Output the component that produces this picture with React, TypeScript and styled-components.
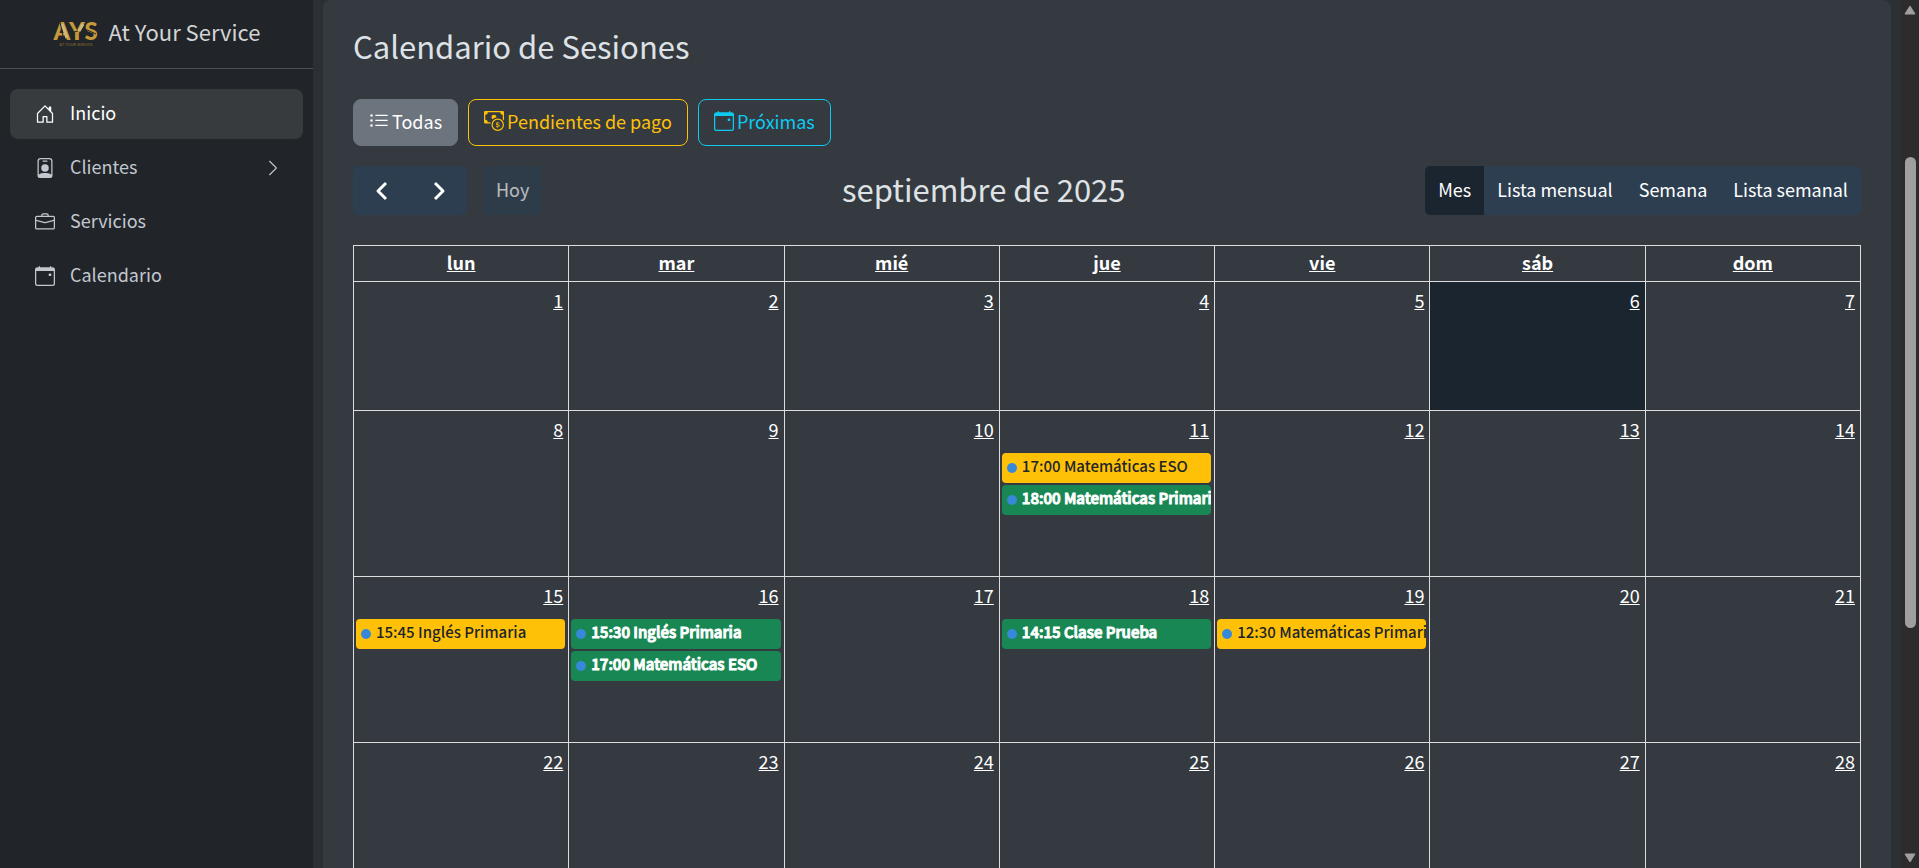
import React from 'react';
import styled, { createGlobalStyle, css } from 'styled-components';
import {
  BsHouseDoor,
  BsPersonBadge,
  BsBriefcase,
  BsCalendarEvent,
  BsChevronRight,
  BsListUl,
  BsCashCoin,
} from 'react-icons/bs';

const GlobalStyle = createGlobalStyle`
  *, *::before, *::after { box-sizing: border-box; }
  body {
    margin: 0;
    background: #2b3035;
    color: #dee2e6;
    font-family: "Noto Sans CJK SC", "Noto Sans", sans-serif;
    font-size: 18px;
    line-height: 30px;
  }
  button { font: inherit; cursor: pointer; }
  a { color: inherit; }
`;

const Shell = styled.div`
  display: flex;
  height: 100vh;
  overflow: hidden;
`;

/* The face sits low in its line box, so labels carry a little room below. */
const Label = styled.span`
  padding-bottom: 4px;
`;

const Sidebar = styled.aside`
  flex: 0 0 313px;
  background: #212529;
`;

const Brand = styled.a`
  display: flex;
  align-items: center;
  justify-content: center;
  gap: 10px;
  height: 69px;
  padding-bottom: 2px;
  border-bottom: 1px solid #495057;
  color: #d3d4d5;
  font-size: 22px;
  text-decoration: none;
`;

const Nav = styled.nav`
  display: flex;
  flex-direction: column;
  gap: 4px;
  padding: 20px 10px;
`;

const NavLink = styled.a<{ $active?: boolean }>`
  display: flex;
  align-items: center;
  height: 50px;
  padding: 0 21px 0 25px;
  border-radius: 8px;
  color: ${(p) => (p.$active ? '#fff' : '#c2c7d0')};
  background: ${(p) => (p.$active ? 'rgba(255, 255, 255, 0.1)' : 'transparent')};
  text-decoration: none;

  ${Label} { flex: 1; padding-left: 15px; }
`;

const Main = styled.main`
  flex: 1;
  min-width: 0;
  padding: 0 10px;
`;

const Card = styled.section`
  min-height: 100%;
  padding: 23px 30px;
  border-radius: 8px 8px 0 0;
  background: #343a40;
`;

const Heading = styled.h1`
  margin: 0 0 31px;
  font-size: 31px;
  font-weight: 400;
  line-height: 45px;
`;

const Filters = styled.div`
  display: flex;
  gap: 10px;
`;

const tones = {
  solid: css`border-color: #6c757d; background: #6c757d; color: #fff;`,
  warning: css`border-color: #ffc107; background: none; color: #ffc107;`,
  info: css`border-color: #0dcaf0; background: none; color: #0dcaf0;`,
};

const FilterButton = styled.button<{ $tone: keyof typeof tones }>`
  display: flex;
  align-items: center;
  gap: 3px;
  height: 47px;
  padding: 0 15px;
  border: 1px solid;
  border-radius: 8px;
  ${(p) => tones[p.$tone]}

  svg { margin-bottom: 4px; }
`;

const Toolbar = styled.header`
  display: flex;
  align-items: center;
  justify-content: space-between;
  margin: 20px 0 30px;
`;

const ToolbarSide = styled.div`
  display: flex;
  gap: 16px;
`;

const ButtonGroup = styled.div`
  display: flex;
  overflow: hidden;
  border-radius: 5px;
`;

const ToolButton = styled.button<{ $active?: boolean }>`
  display: flex;
  align-items: center;
  height: 49px;
  padding: 0 13px;
  border: 0;
  background: ${(p) => (p.$active ? '#1a252f' : '#2c3e50')};
  color: #fff;

  &:disabled {
    border-radius: 5px;
    opacity: 0.65;
  }
`;

const ArrowButton = styled(ToolButton)`
  justify-content: center;
  width: 57px;
`;

const Title = styled.h2`
  margin: 0;
  padding-bottom: 4px;
  font-size: 31px;
  font-weight: 400;
  line-height: 45px;
`;

const MonthTable = styled.table`
  width: 100%;
  table-layout: fixed;
  border-collapse: collapse;
  color: #fff;
`;

const DayHead = styled.th`
  height: 36px;
  padding: 0 0 3px;
  border: 1px solid #dddddd;
  font-weight: 700;
`;

const DayCell = styled.td<{ $short: boolean; $today: boolean }>`
  height: ${(p) => (p.$short ? 129 : 166)}px;
  padding: 3px 3px 0 2px;
  border: 1px solid #dddddd;
  background: ${(p) => (p.$today ? '#1a252f' : 'transparent')};
  vertical-align: top;
`;

const DayNumber = styled.a`
  display: block;
  width: fit-content;
  margin: 0 2px 9px auto;
`;

const EventLink = styled.a<{ $pending: boolean }>`
  display: flex;
  align-items: center;
  gap: 5px;
  height: 30px;
  margin-bottom: 2px;
  padding-left: 5px;
  overflow: hidden;
  border-radius: 4px;
  background: ${(p) => (p.$pending ? '#ffc107' : '#198754')};
  color: ${(p) => (p.$pending ? '#212529' : '#fff')};
  font-size: 15px;
  font-weight: 500;
  -webkit-text-stroke: ${(p) => (p.$pending ? 0 : 1)}px currentColor;
  text-decoration: none;
  white-space: nowrap;

  &::before {
    content: "";
    flex: none;
    width: 10px;
    height: 10px;
    border-radius: 50%;
    background: #3788d8;
  }
`;

const ScrollTrack = styled.div`
  display: flex;
  flex: 0 0 18px;
  flex-direction: column;
  align-items: center;
  justify-content: space-between;
  padding: 5px 0;
  background: #2c2c2c;
`;

const ScrollRun = styled.div`
  flex: 1;
  display: grid;
  grid-template-rows: 142fr 471fr 225fr;
`;

const ScrollThumb = styled.div`
  grid-row: 2;
  width: 11px;
  border-radius: 6px;
  background: #9f9f9f;
`;

const Logo = () => (
  <svg width="46" height="44" viewBox="0 0 46 44" role="img" aria-label="AYS">
    <g fontFamily="Lato, sans-serif" textAnchor="middle">
      <g fontWeight="900" fontSize="24" fill="#c8993a">
        <text x="9" y="29">A</text>
        <text x="24" y="29">Y</text>
        <text x="38" y="29">S</text>
      </g>
      <text x="23" y="35" fontSize="4" fill="#8a6c30">AT YOUR SERVICE</text>
    </g>
    {/* pale strokes and stencil gaps */}
    <path d="M9 13l5 14M30 13l-4 7" stroke="#cdb878" strokeWidth="3" />
    <path d="M7 11l4 19M21 21l4-1M32 18l11 5" stroke="#212529" strokeWidth="1" />
  </svg>
);

const Arrow = ({ d }: { d: string }) => (
  <svg width="20" height="20" viewBox="0 0 20 20" fill="none" stroke="#fff" strokeWidth="3" strokeLinejoin="round" aria-hidden="true">
    <path d={d} />
  </svg>
);

const Caret = ({ d }: { d: string }) => (
  <svg width="14" height="10" viewBox="0 0 14 10" fill="#9f9f9f" stroke="#9f9f9f" strokeLinejoin="round" aria-hidden="true">
    <path d={d} />
  </svg>
);

type Session = { time: string; name: string; pending?: boolean };

const sessions: Record<number, Session[]> = {
  11: [
    { time: '17:00', name: 'Matemáticas ESO', pending: true },
    { time: '18:00', name: 'Matemáticas Primaria' },
  ],
  15: [{ time: '15:45', name: 'Inglés Primaria', pending: true }],
  16: [
    { time: '15:30', name: 'Inglés Primaria' },
    { time: '17:00', name: 'Matemáticas ESO' },
  ],
  18: [{ time: '14:15', name: 'Clase Prueba' }],
  19: [{ time: '12:30', name: 'Matemáticas Primaria', pending: true }],
};

const weekdays = ['lun', 'mar', 'mié', 'jue', 'vie', 'sáb', 'dom'];
const weeks = [0, 1, 2, 3].map((w) => weekdays.map((_, d) => w * 7 + d + 1));
const today = 6;

export default function App() {
  return (
    <>
      <GlobalStyle />
      <Shell>
        <Sidebar>
          <Brand href="#"><Logo /><Label>At Your Service</Label></Brand>
          <Nav>
            <NavLink href="#" $active><BsHouseDoor size={20} /><Label>Inicio</Label></NavLink>
            <NavLink href="#"><BsPersonBadge size={20} /><Label>Clientes</Label><BsChevronRight size={18} /></NavLink>
            <NavLink href="#"><BsBriefcase size={20} /><Label>Servicios</Label></NavLink>
            <NavLink href="#"><BsCalendarEvent size={20} /><Label>Calendario</Label></NavLink>
          </Nav>
        </Sidebar>
        <Main>
          <Card>
            <Heading>Calendario de Sesiones</Heading>
            <Filters>
              <FilterButton $tone="solid"><BsListUl size={20} /><Label>Todas</Label></FilterButton>
              <FilterButton $tone="warning"><BsCashCoin size={20} /><Label>Pendientes de pago</Label></FilterButton>
              <FilterButton $tone="info"><BsCalendarEvent size={20} /><Label>Próximas</Label></FilterButton>
            </Filters>
            <Toolbar>
              <ToolbarSide>
                <ButtonGroup>
                  <ArrowButton aria-label="Anterior"><Arrow d="M14 2L6 10l8 8" /></ArrowButton>
                  <ArrowButton aria-label="Siguiente"><Arrow d="M6 2l8 8-8 8" /></ArrowButton>
                </ButtonGroup>
                <ToolButton disabled><Label>Hoy</Label></ToolButton>
              </ToolbarSide>
              <Title>septiembre de 2025</Title>
              <ButtonGroup>
                <ToolButton $active><Label>Mes</Label></ToolButton>
                <ToolButton><Label>Lista mensual</Label></ToolButton>
                <ToolButton><Label>Semana</Label></ToolButton>
                <ToolButton><Label>Lista semanal</Label></ToolButton>
              </ButtonGroup>
            </Toolbar>
            <MonthTable>
              <thead>
                <tr>{weekdays.map((d) => <DayHead key={d} scope="col"><a href="#">{d}</a></DayHead>)}</tr>
              </thead>
              <tbody>
                {weeks.map((days, w) => (
                  <tr key={w}>
                    {days.map((day) => (
                      <DayCell key={day} $short={w === 0} $today={day === today}>
                        <DayNumber href="#">{day}</DayNumber>
                        {(sessions[day] ?? []).map((s) => (
                          <EventLink key={s.time} href="#" $pending={!!s.pending}><Label>{s.time} {s.name}</Label></EventLink>
                        ))}
                      </DayCell>
                    ))}
                  </tr>
                ))}
              </tbody>
            </MonthTable>
          </Card>
        </Main>
        <ScrollTrack aria-hidden="true">
          <Caret d="M7 1l5 8H2z" />
          <ScrollRun><ScrollThumb /></ScrollRun>
          <Caret d="M7 9l5-8H2z" />
        </ScrollTrack>
      </Shell>
    </>
  );
}
